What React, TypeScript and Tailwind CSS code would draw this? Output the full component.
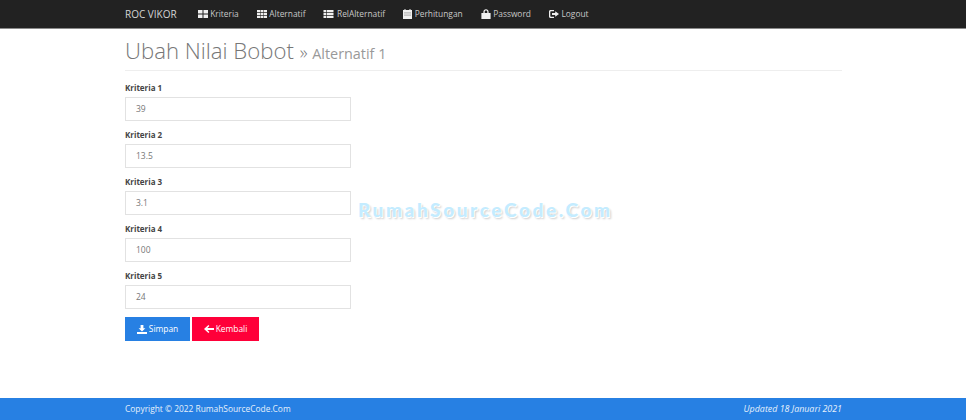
const IconThLarge = () => (
  <svg width="10" height="8" viewBox="0 0 10 8" fill="currentColor">
    <rect x="0" y="0" width="4.5" height="3.5" />
    <rect x="5.5" y="0" width="4.5" height="3.5" />
    <rect x="0" y="4.5" width="4.5" height="3.5" />
    <rect x="5.5" y="4.5" width="4.5" height="3.5" />
  </svg>
)

const IconTh = () => (
  <svg width="10" height="8" viewBox="0 0 10 8" fill="currentColor">
    {[0, 3.5, 7].map((x) =>
      [0, 2.9, 5.8].map((y) => <rect key={`${x}-${y}`} x={x} y={y} width="3" height="2.2" />)
    )}
  </svg>
)

const IconThList = () => (
  <svg width="11" height="8" viewBox="0 0 10 8" fill="currentColor">
    {[0, 2.9, 5.8].map((y) => (
      <g key={y}>
        <rect x="0" y={y} width="2.6" height="2.2" />
        <rect x="3.2" y={y} width="6.8" height="2.2" />
      </g>
    ))}
  </svg>
)

const IconCalendar = () => (
  <svg width="9" height="10" viewBox="0 0 9 10" fill="currentColor">
    <path d="M0 1h1.5V0h1v1h4V0h1v1H9v9H0z" />
    <rect x="1" y="3.4" width="7" height="1" fill="#222" opacity="0.35" />
    <rect x="1" y="5.6" width="7" height="1" fill="#222" opacity="0.35" />
  </svg>
)

const IconLock = () => (
  <svg width="10" height="10" viewBox="0 0 10 10" fill="currentColor">
    <path d="M2.4 4V2.8C2.4 1.2 3.5 0.2 5 0.2S7.6 1.2 7.6 2.8V4H9.6V10H0.4V4zM3.7 4h2.6V2.8c0-.9-.6-1.4-1.3-1.4s-1.3.5-1.3 1.4z" fillRule="evenodd" />
  </svg>
)

const IconLogout = () => (
  <svg width="10" height="8" viewBox="0 0 10 8" fill="currentColor">
    <path d="M1.5 0H5v1.3H2c-.4 0-.7.3-.7.7v4c0 .4.3.7.7.7h3V8H1.5C.7 8 0 7.3 0 6.5v-5C0 .7.7 0 1.5 0z" />
    <path d="M6.2 1.2 10 4 6.2 6.8V5.1H3V2.9h3.2z" />
  </svg>
)

const IconDownload = () => (
  <svg width="10" height="9" viewBox="0 0 10 9" fill="currentColor">
    <path d="M3.6 0h2.8v3.2h2L5 6.4 1.6 3.2h2z" />
    <path d="M0 7h10v2H0z" />
  </svg>
)

const IconArrowLeft = () => (
  <svg width="10" height="8" viewBox="0 0 10 8" fill="currentColor">
    <path d="M4.4 0 5.4 1 3.4 3H10v2H3.4l2 2-1 1L0 4z" />
  </svg>
)

const menu = [
  { label: 'Kriteria', icon: <IconThLarge /> },
  { label: 'Alternatif', icon: <IconTh /> },
  { label: 'RelAlternatif', icon: <IconThList /> },
  { label: 'Perhitungan', icon: <IconCalendar /> },
  { label: 'Password', icon: <IconLock /> },
  { label: 'Logout', icon: <IconLogout /> },
]

const fields = [
  { label: 'Kriteria 1', value: '39' },
  { label: 'Kriteria 2', value: '13.5' },
  { label: 'Kriteria 3', value: '3.1' },
  { label: 'Kriteria 4', value: '100' },
  { label: 'Kriteria 5', value: '24' },
]

export default function App() {
  return (
    <div className="relative flex h-[420px] w-[966px] flex-col overflow-hidden bg-white font-['Open_Sans',sans-serif]">
      <nav className="h-[29px] shrink-0 border-b border-[#8a8a8a] bg-[#222222]">
        <div className="ml-[125px] flex h-[28px] items-center">
          <span className="mr-[21px] text-[10px] font-normal text-[#d4d4d4]">ROC VIKOR</span>
          <ul className="flex items-center gap-[18px]">
            {menu.map((item) => (
              <li key={item.label} className="flex items-center gap-[2.5px] text-[8.4px] text-[#c8c8c8]">
                <span className="text-[#efefef]">{item.icon}</span>
                {item.label}
              </li>
            ))}
          </ul>
        </div>
      </nav>

      <main className="ml-[125px] w-[717px] flex-1">
        <div className="mt-[8px] h-[34px] border-b border-[#eeeeee]">
          <h1 className="text-[22.2px] leading-[28px] font-light text-[#777777]">
            Ubah Nilai Bobot <span className="text-[18px] text-[#777777]">» </span>
            <span className="text-[14.4px] font-normal text-[#999999]">Alternatif 1</span>
          </h1>
        </div>

        <form className="mt-[11px] w-[226px]">
          {fields.map((field) => (
            <div key={field.label} className="mb-[8px]">
              <label className="mb-[4px] block h-[11px] text-[8px] leading-[11px] font-bold text-[#444444]">
                {field.label}
              </label>
              <div className="flex h-[24px] items-center border border-[#e2e2e2] bg-white pl-[10px] text-[8.5px] text-[#777777]">
                {field.value}
              </div>
            </div>
          ))}
          <div className="flex gap-[2px]">
            <button type="button" className="flex h-[24px] w-[65px] items-center justify-center gap-[2px] bg-[#2780e3] text-[8.4px] text-white">
              <IconDownload /> Simpan
            </button>
            <button type="button" className="flex h-[24px] w-[67px] items-center justify-center gap-[2px] bg-[#ff0039] text-[8.4px] text-white">
              <IconArrowLeft /> Kembali
            </button>
          </div>
        </form>
      </main>

      <footer className="flex h-[22px] shrink-0 items-center bg-[#2780e3] text-[#e6f0fb]">
        <div className="ml-[125px] flex w-[717px] items-center justify-between">
          <span className="text-[8.4px] font-medium">Copyright © 2022 RumahSourceCode.Com</span>
          <em className="text-[8.9px]">Updated 18 Januari 2021</em>
        </div>
      </footer>

      <div className="absolute top-[198px] left-[358px] font-['Lato',sans-serif] text-[19px] leading-[24px] font-black tracking-[2.6px] text-[#c4ecff] [text-shadow:1px_1px_0_#ffffff,2px_2px_2px_#cfcfcf]">
        RumahSourceCode.Com
      </div>
    </div>
  )
}
